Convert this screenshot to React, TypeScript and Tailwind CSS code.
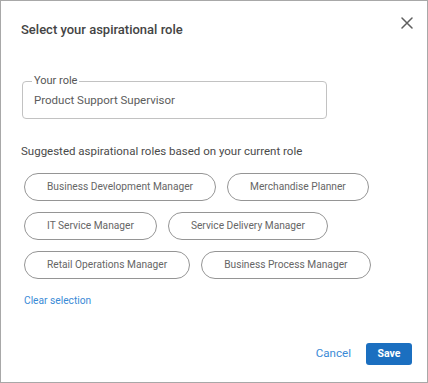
const roles = [
  ["Business Development Manager", "Merchandise Planner"],
  ["IT Service Manager", "Service Delivery Manager"],
  ["Retail Operations Manager", "Business Process Manager"],
];

function CloseIcon() {
  return (
    <svg width="12" height="12" viewBox="0 0 12 12" className="text-[#5f5f5f]">
      <path d="M1 1 L11 11 M11 1 L1 11" stroke="currentColor" strokeWidth="1.5" strokeLinecap="round" />
    </svg>
  );
}

export default function App() {
  return (
    <div
      className="w-[428px] h-[383px] bg-white border border-[#a8a8a8] flex flex-col pl-[20px] pr-[15px] pt-[19px] pb-[17px]"
      style={{ fontFamily: "Roboto, 'Liberation Sans', sans-serif" }}
    >
      <div className="flex items-start justify-between">
        <h2 className="text-[13px] leading-5 text-[#444] font-medium">Select your aspirational role</h2>
        <button className="mt-[-3px] mr-[-1px]">
          <CloseIcon />
        </button>
      </div>

      <div className="relative mt-[41px] ml-[1px] w-[305px] h-[38px] border border-[#c2c2c2] rounded-[4px] px-[11px] flex items-center">
        <span className="absolute left-[9px] top-[-8px] bg-white px-[2px] text-[11px] leading-[14px] text-[#555]">
          Your role
        </span>
        <span className="text-[11.5px] leading-5 text-[#5c5c5c]">Product Support Supervisor</span>
      </div>

      <p className="mt-[22px] text-[11.5px] leading-5 text-[#4a4a4a]">
        Suggested aspirational roles based on your current role
      </p>

      <div className="mt-[12px] ml-[3px] flex flex-col gap-[11px]">
        {roles.map((row, i) => (
          <div key={i} className="flex gap-[11px]">
            {row.map((r) => (
              <button
                key={r}
                className="h-[28px] px-[22px] rounded-full border border-[#959595] text-[10.2px] whitespace-nowrap text-[#666] bg-white"
              >
                {r}
              </button>
            ))}
          </div>
        ))}
      </div>

      <button className="mt-[14px] ml-[3px] self-start text-[10.2px] leading-4 text-[#3a8ad6]">Clear selection</button>

      <div className="mt-auto flex items-center justify-end gap-[15px]">
        <button className="text-[11.6px] text-[#3a8ad6]">Cancel</button>
        <button className="h-[22px] w-[46px] rounded-[3px] bg-[#1b6fc0] text-white text-[10.5px] font-bold">Save</button>
      </div>
    </div>
  );
}
